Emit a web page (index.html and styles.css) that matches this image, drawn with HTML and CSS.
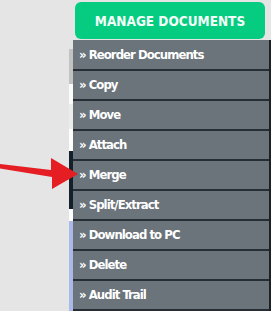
FILE: index.html
```html
<!DOCTYPE html>
<html>
<head>
<meta charset="utf-8">
<link rel="stylesheet" href="styles.css">
</head>
<body>
<div class="page">
  <div class="top">
    <button class="manage">MANAGE DOCUMENTS</button>
  </div>
  <div class="lower">
    <div class="strip">
      <div class="seg s-bg"></div>
      <div class="seg s-gray"></div>
      <div class="seg s-white"></div>
      <div class="seg s-light"></div>
      <div class="seg s-white2"></div>
      <div class="seg s-dark"></div>
      <div class="seg s-white3"></div>
      <div class="seg s-blue"></div>
    </div>
    <ul class="menu">
      <li>» Reorder Documents</li>
      <li>» Copy</li>
      <li>» Move</li>
      <li>» Attach</li>
      <li>» Merge</li>
      <li>» Split/Extract</li>
      <li>» Download to PC</li>
      <li>» Delete</li>
      <li>» Audit Trail</li>
    </ul>
  </div>
  <svg class="arrow" width="80" height="40" viewBox="0 150 80 40">
    <polygon points="0,164 51,170 51,158 78,174 52,189 52,177 0,168.5" fill="#e41e22"/>
  </svg>
</div>
</body>
</html>
```
FILE: styles.css
```css
html, body {
  margin: 0;
  padding: 0;
  background: #e5e5e5;
  overflow: hidden;
}
.page {
  position: relative;
  width: 271px;
  height: 311px;
  font-family: "DejaVu Sans", Verdana, sans-serif;
}
.top {
  padding: 2px 0 0 75px;
  height: 38px;
  box-sizing: border-box;
}
.manage {
  width: 190px;
  height: 37px;
  border: none;
  border-radius: 6px;
  background: #05cc80;
  color: #f4fffa;
  font-family: "DejaVu Sans Condensed", "DejaVu Sans", Verdana, sans-serif;
  font-stretch: condensed;
  font-weight: bold;
  font-size: 13.5px;
  padding: 0;
  display: block;
}
.lower {
  display: flex;
  margin-top: 2px;
}
.strip {
  width: 4px;
  margin-left: 69px;
  display: flex;
  flex-direction: column;
}
.seg { width: 4px; }
.s-bg { height: 9px; background: #e5e5e5; }
.s-gray { height: 35px; background: #c2c2c2; }
.s-white { height: 20px; background: #fbfbfb; }
.s-light { height: 25px; background: #ececec; }
.s-white2 { height: 22px; background: #ffffff; }
.s-dark { height: 58px; background: #14202c; }
.s-white3 { height: 12px; background: #ffffff; }
.s-blue { height: 90px; background: #a9b9e8; }
.menu {
  list-style: none;
  margin: 0;
  padding: 1px 0 0 0;
  width: 196px;
  background: #6b737b;
  border-right: 2px solid #1c2126;
}
.menu li {
  height: 28px;
  line-height: 28px;
  border-bottom: 2px solid #262d35;
  color: #ffffff;
  font-family: "DejaVu Sans Condensed", "DejaVu Sans", Verdana, sans-serif;
  font-stretch: condensed;
  font-weight: bold;
  font-size: 13px;
  letter-spacing: -0.95px;
  padding-left: 6px;
  white-space: nowrap;
}
.arrow {
  position: absolute;
  left: 0;
  top: 150px;
}
```
